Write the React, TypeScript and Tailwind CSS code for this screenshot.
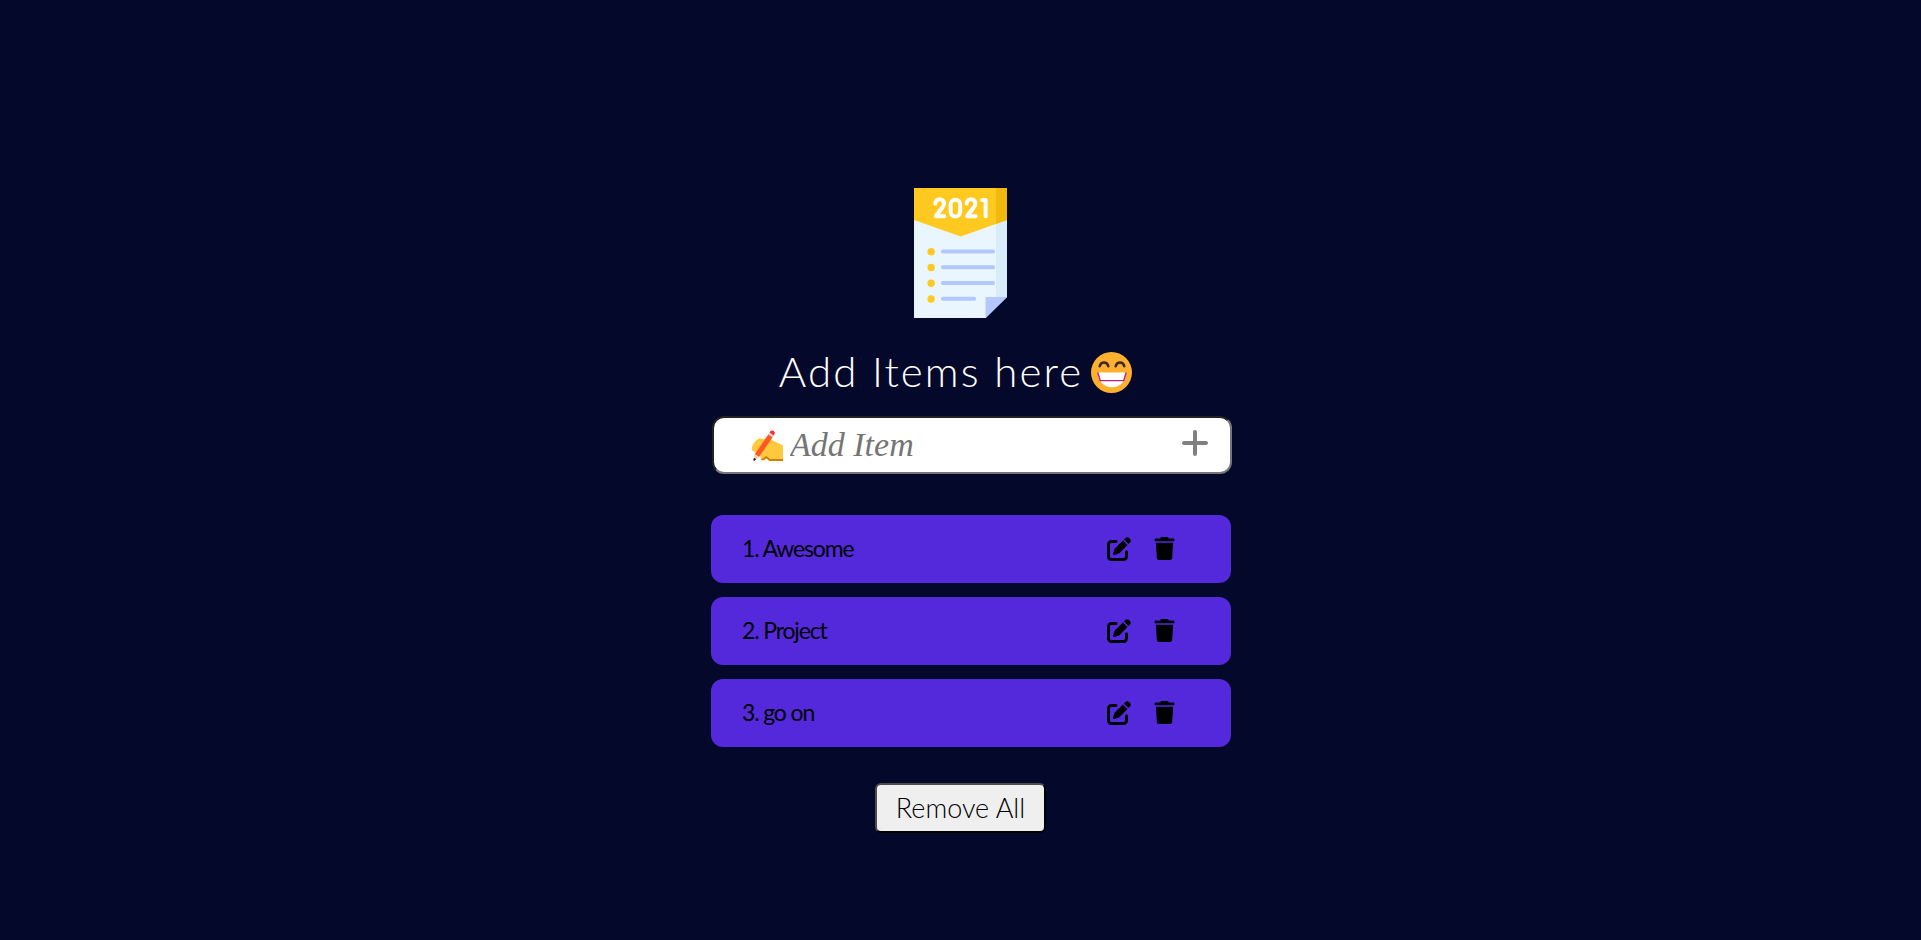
import { FaPenToSquare, FaPlus, FaTrash } from "react-icons/fa6";

const items = ["Awesome", "Project", "go on"];

function NoteLogo() {
  return (
    <svg width="93" height="130" viewBox="0 0 93.500 130" preserveAspectRatio="none" role="img" aria-label="2021 to-do list">
      <path d="M0 0H93.5V109L72 130H0Z" fill="#e9f6fe" />
      <path d="M82.5 0H93.5V109H82.5Z" fill="#d8ecf9" />
      <path d="M0 0H93.5V32L47 48.500L0 32Z" fill="#ffc91f" />
      <path d="M82.500 0H93.500V32L82.500 36Z" fill="#f2b90c" />
      <path d="M72 109H93.500L72 130Z" fill="#b4c7fe" />
      <g fill="#ffc91f">
        <circle cx="17.200" cy="63.700" r="3.700" />
        <circle cx="17.200" cy="79.500" r="3.700" />
        <circle cx="17.200" cy="95.200" r="3.700" />
        <circle cx="17.200" cy="111" r="3.700" />
      </g>
      <g stroke="#b4c7fe" strokeWidth="3.900" strokeLinecap="round">
        <path d="M29 63.500H79.500M29 79.300H79.500M29 95H79.500M29 110.800H60.500" />
      </g>
      <g fill="none" stroke="#fff" strokeWidth="4" strokeLinecap="round" strokeLinejoin="round">
        <path d="M21.500 15.500C21.500 9.500 30.200 10 30.200 15.500C30.200 19 25 23.500 22 28.200H30.500" />
        <rect x="36.800" y="11.700" width="9.600" height="16.800" rx="4.800" />
        <path d="M53 15.500C53 9.500 61.700 10 61.700 15.500C61.700 19 56.500 23.500 53.500 28.200H62" />
        <path d="M68.500 12H72V28.300" />
      </g>
    </svg>
  );
}

function GrinEmoji() {
  return (
    <svg width="41" height="43" viewBox="0 -2 41 43" role="img" aria-label="Grinning face">
      <circle cx="20.500" cy="20.500" r="20.500" fill="#ffb02e" />
      <path
        d="M8.700 14.200C9.700 9.200 16.300 9.200 17.300 14.200M24.700 14.200C25.700 9.200 32.300 9.200 33.300 14.200"
        fill="none"
        stroke="#402a32"
        strokeWidth="2.600"
        strokeLinecap="round"
      />
      <path d="M7 20.500H35C34.500 30 29 35.300 21 35.300C13 35.300 7.500 30 7 20.500Z" fill="#fff" />
      <path d="M6.800 20.500L9.300 28.600H32.700L35.200 20.500" fill="none" stroke="#bb1d80" strokeWidth="1.400" />
    </svg>
  );
}

function WritingHand() {
  return (
    <svg width="33" height="33" viewBox="0 0 33 33" aria-hidden="true" className="shrink-0">
      <path d="M8 9.500L19 10L32 16.500V31.500H18L15.500 28L11 31L7.500 24.500L1 21.500C0 18 3 12 8 9.500Z" fill="#ffc83d" />
      <path d="M9.500 30.500L15.500 27L19 30H32V32H18.500L15.500 29.500L12 31.500Z" fill="#d67d00" />
      <path d="M17.500 5L22 7.800L8 28L3.800 25.300Z" fill="#ff5822" />
      <path d="M18.500 3.600L22.800 6.500L21.500 8.500L17.200 5.600Z" fill="#d3d3d3" />
      <path d="M18.500 3.500C19.500 1 22 1 23 2.300C24.200 3.600 24 5 22.700 6.500Z" fill="#f8312f" />
      <path d="M3.800 25.300L8 28L3.500 31.500L2.500 31Z" fill="#ffcea0" />
      <path d="M3 28.800L5.300 30.200L3.200 32L2.300 31.300Z" fill="#321b41" />
    </svg>
  );
}

export default function App() {
  return (
    <main className="flex min-h-screen flex-col items-center bg-[#04082b] px-4 pt-47 pb-10 font-[Lato,sans-serif]">
      <NoteLogo />

      <h1 className="mt-[27px] mr-[10px] flex items-center gap-2 text-[42px] leading-[52px] font-light text-white">
        <span className="tracking-wider">Add Items here</span>
        <GrinEmoji />
      </h1>

      <form
        onSubmit={(e) => e.preventDefault()}
        className="mt-[19px] ml-[23px] flex h-[58px] w-full max-w-[520px] items-center rounded-xl border-2 border-t-[#222] border-r-[#767676] border-b-[#767676] border-l-[#222] bg-white pr-[19px] pl-[37px]"
      >
        <WritingHand />
        <input
          type="text"
          aria-label="Add item"
          placeholder="Add Item"
          className="ml-[6px] min-w-0 flex-1 bg-transparent font-['Liberation_Serif',serif] text-[34px] leading-10 text-black italic outline-none placeholder:text-[#757575]"
        />
        <button type="submit" aria-label="Add" className="pb-1 text-[32px] text-[#808080]">
          <FaPlus />
        </button>
      </form>

      <ul className="mt-[41px] ml-[21px] flex w-full max-w-[520px] flex-col gap-[14px]">
        {items.map((item, i) => (
          <li key={item} className="flex h-17 items-center rounded-xl bg-[#5429db] pr-[55px] pb-px pl-[31px] text-black">
            <span className="flex-1 text-[23px] tracking-tighter">
              {i + 1}. {item}
            </span>
            <button type="button" aria-label={`Edit ${item}`} className="mr-[22px] text-2xl">
              <FaPenToSquare />
            </button>
            <button type="button" aria-label={`Delete ${item}`} className="text-[23px]">
              <FaTrash />
            </button>
          </li>
        ))}
      </ul>

      <button
        type="button"
        className="mt-9 rounded-md border-2 border-t-[#4c4c4c] border-r-black border-b-black border-l-[#4c4c4c] bg-[#efefef] px-[19px] py-1 text-[27px] leading-[38px] font-light text-black"
      >
        Remove All
      </button>
    </main>
  );
}
